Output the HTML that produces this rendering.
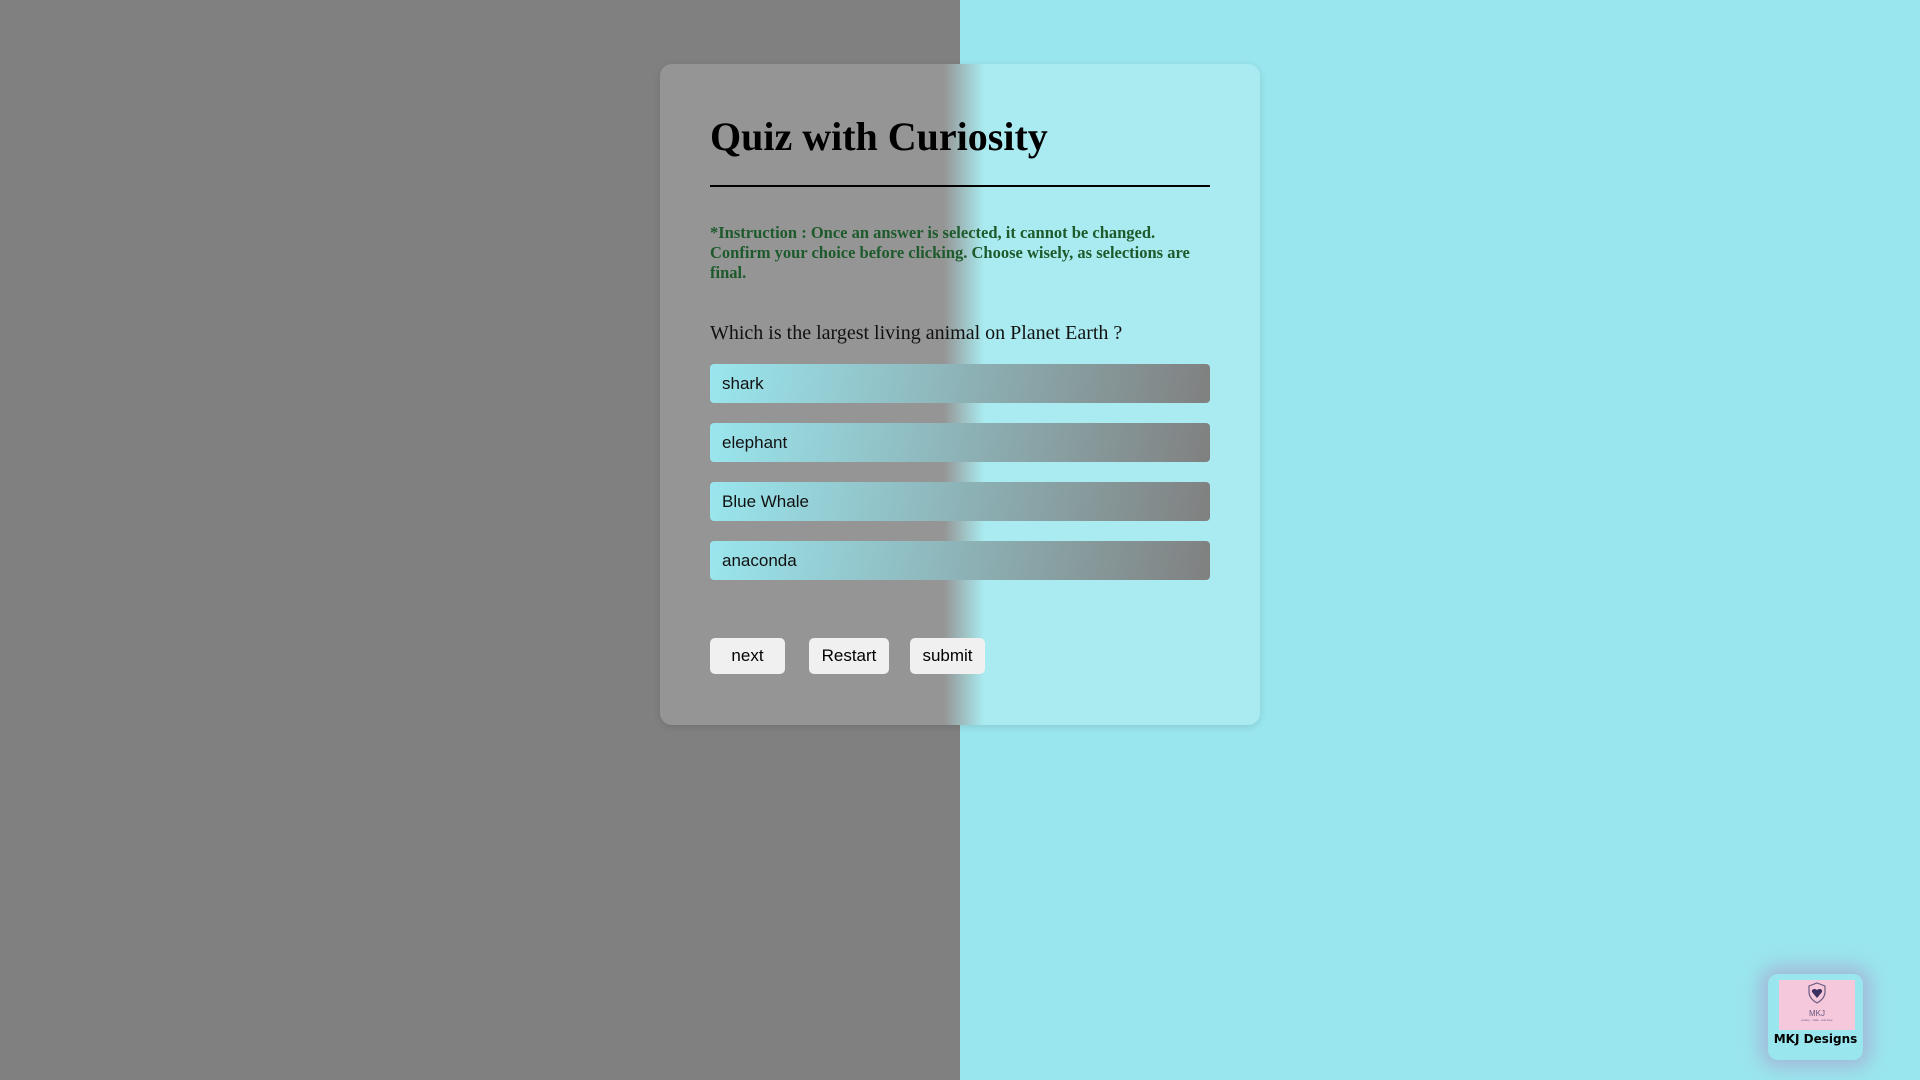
<!DOCTYPE html>
<html><head><meta charset="utf-8"><style>
html,body{margin:0;padding:0;width:1920px;height:1080px;overflow:hidden}
body{background:linear-gradient(to right,#808080 0,#808080 960px,#9ae6ee 960px,#9ae6ee 100%);position:relative;font-family:"Liberation Serif",serif}
.card{position:absolute;left:660px;top:64px;width:600px;height:661px;border-radius:12px;
background:linear-gradient(to right,#959595 0,#959595 284px,#a9ebf0 324px,#a9ebf0 100%);box-shadow:0 2px 8px rgba(0,0,0,.12)}
h1{position:absolute;left:50px;top:49px;margin:0;font-size:40px;font-weight:bold;color:#000;line-height:48px}
.hr{position:absolute;left:50px;top:121px;width:500px;height:2px;background:#000}
.ins{position:absolute;left:50px;top:159px;width:500px;font-size:16.5px;font-weight:bold;color:#1d5a2c;line-height:20px}
.q{position:absolute;left:50px;top:256px;font-size:20px;line-height:26px;color:#111}
.opt{position:absolute;left:50px;width:488px;height:39px;padding-left:12px;border-radius:4px;
background:linear-gradient(100deg,#9ae6ee,#808080);font-family:"Liberation Sans",sans-serif;font-size:17px;line-height:39px;color:#111}
.btn{position:absolute;top:574px;height:36px;border-radius:5px;background:#f0f0f0;font-family:"Liberation Sans",sans-serif;font-size:17px;line-height:36px;text-align:center;color:#000}
.logo{position:absolute;left:1768px;top:974px;width:95px;height:86px;border-radius:10px;background:#9ae6ee;box-shadow:0 0 18px 8px rgba(170,150,200,.55)}
.img{position:absolute;left:11px;top:6px;width:76px;height:50px;background:#f5c8dc;text-align:center;font-family:"Liberation Sans",sans-serif;color:#6a5a80}
.lt{position:absolute;left:0;width:95px;top:58px;text-align:center;font-family:"DejaVu Sans",sans-serif;font-weight:bold;font-size:12px;color:#000}
</style></head><body>
<div class="card">
<h1>Quiz with Curiosity</h1>
<div class="hr"></div>
<div class="ins">*Instruction : Once an answer is selected, it cannot be changed. Confirm your choice before clicking. Choose wisely, as selections are final.</div>
<div class="q">Which is the largest living animal on Planet Earth ?</div>
<div class="opt" style="top:300px">shark</div>
<div class="opt" style="top:359px">elephant</div>
<div class="opt" style="top:418px">Blue Whale</div>
<div class="opt" style="top:477px">anaconda</div>
<div class="btn" style="left:50px;width:75px">next</div>
<div class="btn" style="left:149px;width:80px">Restart</div>
<div class="btn" style="left:250px;width:75px">submit</div>
</div>
<div class="logo"><div class="img">
<svg width="20" height="22" viewBox="0 0 20 22" style="margin-top:2px"><path d="M10 1 L18 4 V10 C18 15 14 19 10 21 C6 19 2 15 2 10 V4 Z" fill="none" stroke="#6a5a80" stroke-width="1.2"/><path d="M10 16 L5 10 C4 7 8 6 10 8 C12 6 16 7 15 10 Z" fill="#3a3060"/></svg>
<div style="font-size:8px;line-height:9px">MKJ</div>
<div style="font-size:3px">poetry . code . and love</div>
</div><div class="lt">MKJ Designs</div></div>
</body></html>
